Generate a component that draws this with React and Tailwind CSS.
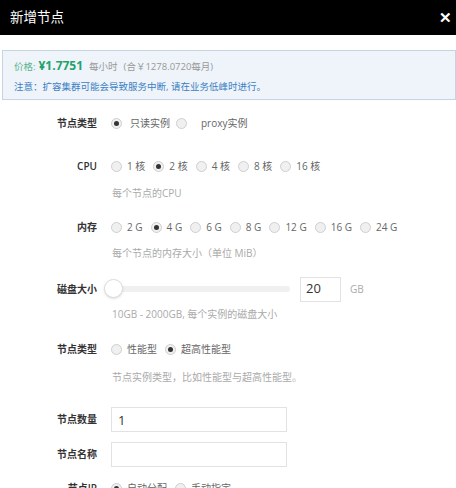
import { useState } from "react";

function Radio({ checked }) {
  return (
    <span className="w-[11px] h-[11px] rounded-full border border-[#cfcfcf] bg-[#f0f0f0] flex items-center justify-center shrink-0">
      {checked && <span className="w-[5px] h-[5px] rounded-full bg-[#333]" />}
    </span>
  );
}

function RadioGroup({ options, value, gap = "gap-[5px]", spacing = "gap-[8px]" }) {
  return (
    <div className={`flex items-center ${spacing}`}>
      {options.map((opt) => (
        <label key={opt} className={`flex items-center ${gap} text-[10px] text-[#666] leading-none`}>
          <Radio checked={opt === value} />
          <span>{opt}</span>
        </label>
      ))}
    </div>
  );
}

function Row({ label, className = "", children }) {
  return (
    <div className={`flex items-center ${className}`}>
      <div className="w-[97px] text-right text-[10px] font-semibold text-[#333] shrink-0">{label}</div>
      <div className="pl-[14px] flex items-center">{children}</div>
    </div>
  );
}

function Hint({ className = "", children }) {
  return (
    <div className={`pl-[112px] text-[10px] leading-[16px] text-[#aaa] ${className}`}>{children}</div>
  );
}

export default function App() {
  const [count, setCount] = useState("1");

  return (
    <div className="w-[456px] h-[488px] overflow-hidden bg-white font-['Open_Sans','Noto_Sans_CJK_SC',sans-serif]">
      <div className="h-[35px] bg-black flex items-center justify-between pl-[10px] pr-[4px]">
        <span className="text-white text-[13.5px]">新增节点</span>
        <span className="text-white text-[15px] font-bold leading-none">✕</span>
      </div>

      <div className="mt-[15px] ml-[2px] h-[50px] border border-[#c6d3e2] bg-[#eef4fa] px-[11px] pt-[6px]">
        <div className="flex items-baseline text-[9.5px] leading-[18px]">
          <span className="text-[#5ab28c]">价格:</span>
          <span className="ml-[3px] text-[12px] font-bold text-[#23a26c]">¥1.7751</span>
          <span className="ml-[6px] text-[#999]">每小时</span>
          <span className="ml-[6px] text-[#999]">(合￥1278.0720每月)</span>
        </div>
        <div className="mt-[2px] text-[9.5px] leading-[18px] text-[#3b7fc4]">
          注意：扩容集群可能会导致服务中断, 请在业务低峰时进行。
        </div>
      </div>

      <Row label="节点类型" className="mt-[13px] h-[20px]">
        <div className="flex items-center text-[10px] text-[#666] leading-none">
          <Radio checked />
          <span className="ml-[8px]">只读实例</span>
          <span className="ml-[6px]"><Radio /></span>
          <span className="ml-[14px]">proxy实例</span>
        </div>
      </Row>

      <Row label="CPU" className="mt-[23px] h-[20px]">
        <RadioGroup options={["1 核", "2 核", "4 核", "8 核", "16 核"]} value="2 核" />
      </Row>
      <Hint className="mt-[9px]">每个节点的CPU</Hint>

      <Row label="内存" className="mt-[16px] h-[20px]">
        <RadioGroup options={["2 G", "4 G", "6 G", "8 G", "12 G", "16 G", "24 G"]} value="4 G" spacing="gap-[8px]" />
      </Row>
      <Hint className="mt-[8px]">每个节点的内存大小（单位 MiB）</Hint>

      <div className="mt-[15px] h-[26px] flex items-center">
        <div className="w-[97px] text-right text-[10px] font-semibold text-[#333] shrink-0">磁盘大小</div>
        <div className="relative ml-[8px] w-[185px] h-[6px] rounded-full bg-[#f0f0f0]">
          <span className="absolute left-[-1px] top-[-7px] w-[19px] h-[19px] rounded-full bg-white border border-[#ddd] shadow-sm" />
        </div>
        <div className="ml-[10px] w-[41px] h-[25px] border border-[#e2e2e2] flex items-center pl-[5px] text-[13px] text-[#333]">20</div>
        <span className="ml-[9px] text-[10px] text-[#aaa]">GB</span>
      </div>
      <Hint className="mt-[4px]">10GB - 2000GB, 每个实例的磁盘大小</Hint>

      <Row label="节点类型" className="mt-[17px] h-[20px]">
        <RadioGroup options={["性能型", "超高性能型"]} value="超高性能型" />
      </Row>
      <Hint className="mt-[10px]">节点实例类型，比如性能型与超高性能型。</Hint>

      <Row label="节点数量" className="mt-[22px] h-[25px]">
        <input
          value={count}
          onChange={(e) => setCount(e.target.value)}
          className="w-[176px] h-[25px] border border-[#e2e2e2] px-[6px] text-[13px] text-[#333] outline-none"
        />
      </Row>
      <Row label="节点名称" className="mt-[10px] h-[25px]">
        <input className="w-[176px] h-[25px] border border-[#e2e2e2] px-[6px] text-[13px] text-[#333] outline-none" />
      </Row>

      <Row label="节点IP" className="mt-[11px] h-[20px]">
        <RadioGroup options={["自动分配", "手动指定"]} value="自动分配" />
      </Row>
    </div>
  );
}
